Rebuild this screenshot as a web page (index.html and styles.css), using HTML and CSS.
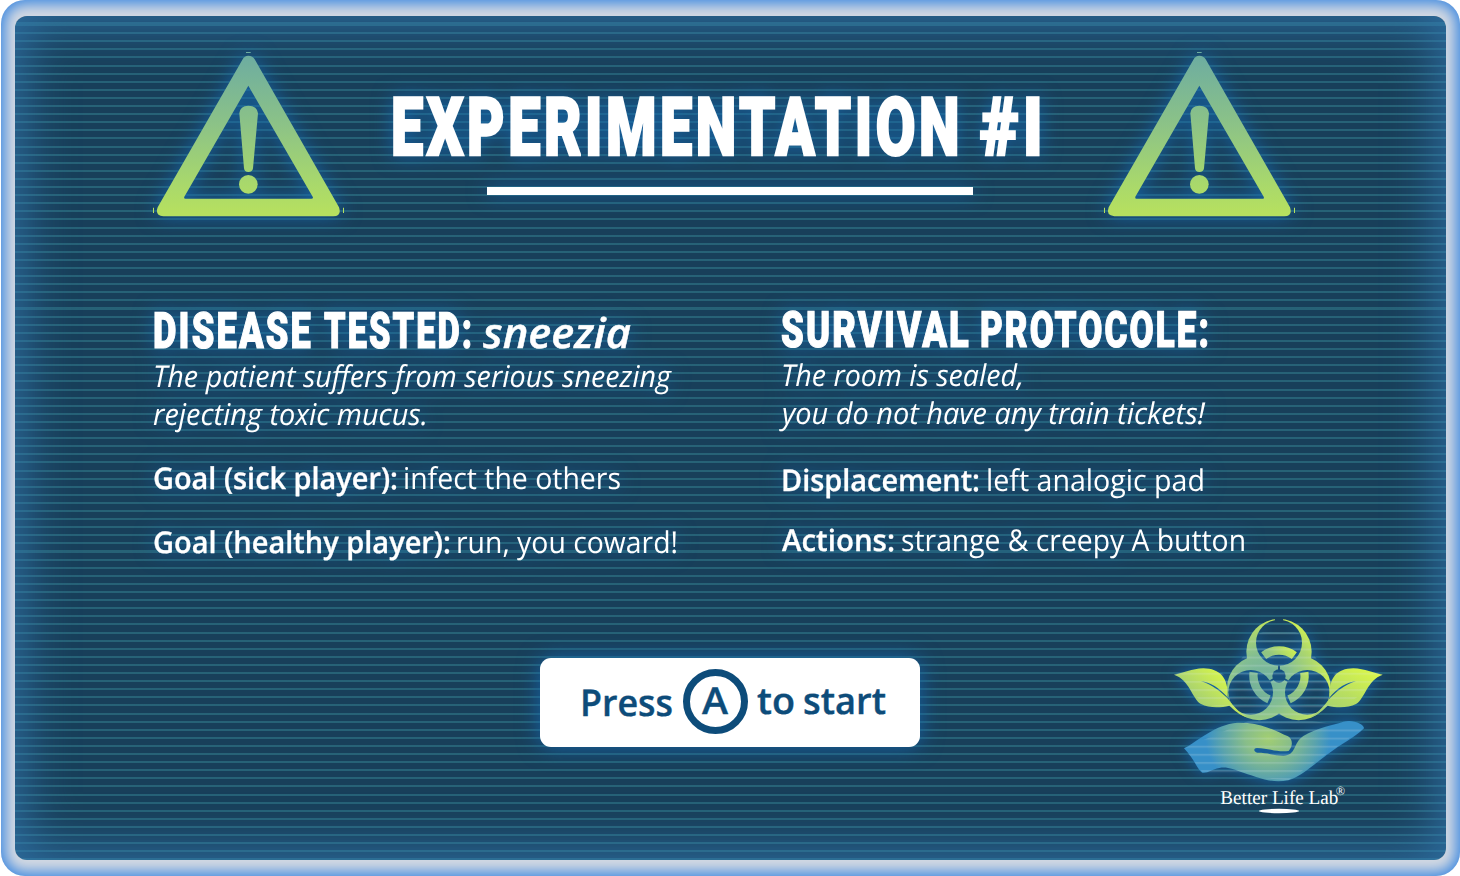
FILE: index.html
```html
<!DOCTYPE html>
<html lang="en">
<head>
<meta charset="utf-8">
<title>Experimentation</title>
<link rel="stylesheet" href="styles.css">
</head>
<body>
<svg class="defs" width="0" height="0">
  <defs>
    <linearGradient id="warn" gradientUnits="userSpaceOnUse" x1="0" y1="60" x2="0" y2="520">
      <stop offset="0" stop-color="#6fae9f"/><stop offset=".45" stop-color="#8ec485"/><stop offset=".8" stop-color="#a8d86c"/><stop offset="1" stop-color="#b6e05f"/>
    </linearGradient>
    <symbol id="warning" viewBox="0 0 660 570">
      <g fill="url(#warn)">
        <path fill-rule="evenodd" d="M308 58Q313 47 325 47Q338 47 344 58L597 502Q606 529 580 529H70Q44 526 53 502ZM325 137L133 470Q131 476 136 476H514Q521 476 518 470Z"/>
        <path d="M298 220Q300 197 325 197Q352 198 354 220L339 385Q338 396 325 396Q313 396 312 385Z"/>
        <circle cx="325" cy="433" r="28"/>
        <path d="M318 36H332V39H318ZM39 503H42V519H39ZM609 503H612V519H609Z"/>
      </g>
    </symbol>
  </defs>
</svg>
<div class="frame">
<main class="panel">
  <header class="header">
    <svg class="sign glow"><use href="#warning"/></svg>
    <div class="title glow">
      <svg class="title-text">
        <text class="display" x="9" y="75" lengthAdjust="spacingAndGlyphs" textLength="572">EXPERIMENTATION</text>
        <text class="display" x="598" y="75" lengthAdjust="spacingAndGlyphs" textLength="67">#I</text>
      </svg>
      <div class="rule"></div>
    </div>
    <svg class="sign glow"><use href="#warning"/></svg>
  </header>

  <div class="columns">
    <section class="column glow">
      <svg class="head"><text class="display sub" x="-1" y="48" lengthAdjust="spacingAndGlyphs" textLength="160">DISEASE</text><text class="display sub" x="170" y="48" lengthAdjust="spacingAndGlyphs" textLength="150">TESTED:</text><text class="name" x="329" y="48" lengthAdjust="spacingAndGlyphs" textLength="148">sneezia</text></svg>
      <svg class="row"><text class="it" x="-1" y="32" lengthAdjust="spacingAndGlyphs" textLength="518">The patient suffers from serious sneezing</text></svg>
      <svg class="row"><text class="it" x="-1" y="32" lengthAdjust="spacingAndGlyphs" textLength="275">rejecting toxic mucus.</text></svg>
      <svg class="row goal"><text class="strong" x="-1" y="32" lengthAdjust="spacingAndGlyphs" textLength="245">Goal (sick player):</text><text x="249" y="32" lengthAdjust="spacingAndGlyphs" textLength="218">infect the others</text></svg>
      <svg class="row goal-next"><text class="strong" x="-1" y="32" lengthAdjust="spacingAndGlyphs" textLength="298">Goal (healthy player):</text><text x="302" y="32" lengthAdjust="spacingAndGlyphs" textLength="222">run, you coward!</text></svg>
    </section>
    <section class="column glow right">
      <svg class="head"><text class="display sub" x="-1" y="48" lengthAdjust="spacingAndGlyphs" textLength="190">SURVIVAL</text><text class="display sub" x="198" y="48" lengthAdjust="spacingAndGlyphs" textLength="231">PROTOCOLE:</text></svg>
      <svg class="row"><text class="it" x="-1" y="32" lengthAdjust="spacingAndGlyphs" textLength="243">The room is sealed,</text></svg>
      <svg class="row"><text class="it" x="0" y="32" lengthAdjust="spacingAndGlyphs" textLength="423">you do not have any train tickets!</text></svg>
      <svg class="row key"><text class="strong" x="-1" y="32" lengthAdjust="spacingAndGlyphs" textLength="199">Displacement:</text><text x="204" y="32" lengthAdjust="spacingAndGlyphs" textLength="219">left analogic pad</text></svg>
      <svg class="row key-next"><text class="strong" x="0" y="32" lengthAdjust="spacingAndGlyphs" textLength="113">Actions:</text><text x="119" y="32" lengthAdjust="spacingAndGlyphs" textLength="345">strange &amp; creepy A button</text></svg>
    </section>
  </div>

  <footer class="footer">
    <button class="start">
      <svg class="start-label">
        <text x="40" y="58" lengthAdjust="spacingAndGlyphs" textLength="93">Press</text>
        <circle cx="175.500" cy="43.500" r="29"/>
        <text x="162" y="56" lengthAdjust="spacingAndGlyphs" textLength="26">A</text>
        <text x="217" y="56" lengthAdjust="spacingAndGlyphs" textLength="38">to</text>
        <text x="263" y="56" lengthAdjust="spacingAndGlyphs" textLength="83">start</text>
      </svg>
    </button>
    <svg class="logo" viewBox="0 0 720 660">
      <defs>
        <radialGradient id="bio" gradientUnits="userSpaceOnUse" cx="310" cy="230" r="225">
          <stop offset="0" stop-color="#6fb09f"/><stop offset=".35" stop-color="#82bd93"/><stop offset=".7" stop-color="#aed86c"/><stop offset="1" stop-color="#dffb45"/>
        </radialGradient>
        <linearGradient id="ring" gradientUnits="userSpaceOnUse" x1="270" y1="270" x2="430" y2="130">
          <stop offset="0" stop-color="#6fae9f"/><stop offset=".6" stop-color="#93c680"/><stop offset="1" stop-color="#e2ff3f"/>
        </linearGradient>
        <linearGradient id="leaf" x1="0" y1="1" x2="1" y2=".3">
          <stop offset="0" stop-color="#84bb8b"/><stop offset=".5" stop-color="#b2d968"/><stop offset="1" stop-color="#e2ff3f"/>
        </linearGradient>
        <linearGradient id="leaf2" x1="0" y1="1" x2=".8" y2="0">
          <stop offset="0" stop-color="#9acb78"/><stop offset=".55" stop-color="#b9df60"/><stop offset="1" stop-color="#daf748"/>
        </linearGradient>
        <radialGradient id="palm" gradientUnits="userSpaceOnUse" cx="325" cy="400" r="235" gradientTransform="translate(0 60) scale(1 .85)">
          <stop offset="0" stop-color="#a2ce72"/><stop offset=".3" stop-color="#87bd8a"/><stop offset=".6" stop-color="#5aa3ac"/><stop offset=".8" stop-color="#3790c8"/>
        </radialGradient>
        <mask id="cut">
          <g fill="#fff"><circle cx="357" cy="140" r="98"/><circle cx="298" cy="249" r="97"/><circle cx="416" cy="249" r="97"/></g>
          <g fill="#000"><circle cx="357" cy="113" r="69"/><circle cx="272" cy="262" r="67"/><circle cx="442" cy="262" r="67"/><circle cx="357" cy="213" r="20"/><path d="M345 35H369V60H345Z"/></g>
          <path d="M357 213V170M357 213L320 234M357 213L394 234" stroke="#000" stroke-width="6"/>
        </mask>
        <pattern id="lines" patternUnits="userSpaceOnUse" y="9" width="720" height="24.3"><rect width="720" height="6" fill="#d9ecef" opacity=".18"/></pattern>
      </defs>
      <g class="mark">
        <path fill="none" stroke="url(#ring)" stroke-width="25" d="M311 152A76.500 76.500 0 0 1 403 152M281 202A76.500 76.500 0 0 0 327 283M433 202A76.500 76.500 0 0 1 387 283"/>
        <rect x="190" y="35" width="335" height="320" fill="url(#bio)" mask="url(#cut)"/>
        <path fill="url(#leaf)" d="M42 209C70 205 95 191 130 190C180 191 206 218 203 277C178 249 150 231 123 229C155 238 182 259 205 283C222 305 235 322 262 337C238 331 222 314 208 302C180 309 145 309 123 297C95 280 90 225 42 209Z"/>
        <path fill="url(#leaf2)" d="M668 209C640 205 615 191 580 190C530 191 506 218 509 277C532 249 560 231 588 229C555 238 530 259 507 283C490 305 477 322 450 337C474 331 490 314 503 302C530 309 565 309 588 297C616 280 621 225 668 209Z"/>
        <path fill="url(#palm)" d="M72 430C112 410 165 358 232 353C300 351 344 376 384 394C398 402 400 422 386 438C350 442 330 431 291 429C280 429 280 441 292 443C325 443 338 451 370 452C411 450 397 416 430 393C470 368 515 362 550 350C581 342 613 359 612 370C590 393 540 420 500 450C450 487 422 515 385 526C330 536 293 516 250 503C220 493 200 484 178 489C155 493 145 505 127 503C112 495 105 465 72 430Z"/>
      </g>
      <path fill="url(#lines)" d="M42 209C95 185 170 180 203 220L259 140C260 50 455 50 455 140L509 220C540 180 620 190 668 209C620 225 610 305 503 302L440 346L612 370L385 526L128 503L72 430L270 346L208 302C90 315 95 225 42 209Z"/>
      <text class="brand" x="181" y="597" lengthAdjust="spacingAndGlyphs" textLength="354">Better Life Lab</text>
      <text class="reg" x="527" y="570" lengthAdjust="spacingAndGlyphs" textLength="28">®</text>
      <ellipse cx="357" cy="618" rx="60" ry="6.500" fill="#fff"/>
    </svg>
  </footer>
</main>
</div>
</body>
</html>
```
FILE: styles.css
```css
body { margin: 0; background: #fff; }
.defs { display: block; }
.frame {
  box-sizing: border-box; width: 1459px; height: 876px; margin-left: 1px;
  padding: 16px 14px; border-radius: 24px; background: #d5dae2;
  box-shadow: inset 0 0 14px 4px #3c88e0;
}
.panel {
  box-sizing: border-box; width: 1431px; height: 844px; overflow: hidden;
  border-radius: 12px; padding: 24px 0 0 125px;
  display: flex; flex-direction: column;
  background: repeating-linear-gradient(to bottom, rgba(62,155,165,.38) 0, rgba(62,155,165,.38) 2px, transparent 2px, transparent 8.1px) 0 8px, #183f5a;
  box-shadow: inset 0 0 50px 8px rgba(52,124,182,.78);
}
.glow { filter: drop-shadow(0 0 10px rgba(22,104,175,.85)); }
.header { display: flex; height: 190px; }
.sign { width: 220px; height: 190px; flex: none; overflow: visible; }
.title { width: 731px; display: flex; flex-direction: column; }
.title-text { width: 709px; height: 107px; margin: 40px 0 0 22px; overflow: visible; flex: none; }
.rule { width: 486px; height: 8px; background: #fff; margin-left: 127px; flex: none; }
text { fill: #fff; font: 400 30px "Open Sans", "Noto Sans", sans-serif; }
text[textLength] { text-rendering: geometricPrecision; }
.display { font: 900 81px Roboto, sans-serif; stroke: #fff; stroke-width: 2.5px; letter-spacing: 5px; }
.sub { font-size: 50px; stroke-width: 1.2px; letter-spacing: 3px; }
.name { font: italic 600 42px "Open Sans", sans-serif; stroke: #fff; stroke-width: .5px; }
.it { font-style: italic; }
.strong { font-weight: 600; stroke: #fff; stroke-width: .3px; }
.columns { display: flex; margin-top: 70px; height: 300px; }
.column { width: 628px; padding-left: 14px; box-sizing: border-box; flex: none; display: flex; flex-direction: column; }
.right { margin-top: -1px; }
.head { display: block; width: 560px; height: 55px; overflow: visible; flex: none; }
.row { display: block; width: 560px; height: 38px; overflow: visible; flex: none; }
.goal { margin-top: 26px; }
.goal-next { margin-top: 26px; }
.key { margin-top: 29px; }
.key-next { margin-top: 22px; }
.footer { display: flex; align-items: flex-start; }
.start {
  box-sizing: border-box; width: 380px; height: 89px; margin: 58px 0 0 400px; padding: 0;
  border: 0; border-radius: 11px; background: #fff; flex: none;
  box-shadow: 0 0 22px rgba(22,104,175,.9);
}
.start-label { display: block; width: 380px; height: 89px; }
.start-label text { font: 600 37px "Open Sans", sans-serif; fill: #0d4c7a; stroke: #0d4c7a; stroke-width: .4px; }
.start-label circle { fill: none; stroke: #0d4c7a; stroke-width: 7px; }
.logo { width: 240px; height: 220px; margin: 5px 0 0 240px; flex: none; overflow: visible; }
.mark { filter: drop-shadow(0 0 22px rgba(22,104,175,.9)); }
.brand { font: 400 59px "Liberation Serif", serif; }
.reg { font: 400 38px "Liberation Serif", serif; }
```
